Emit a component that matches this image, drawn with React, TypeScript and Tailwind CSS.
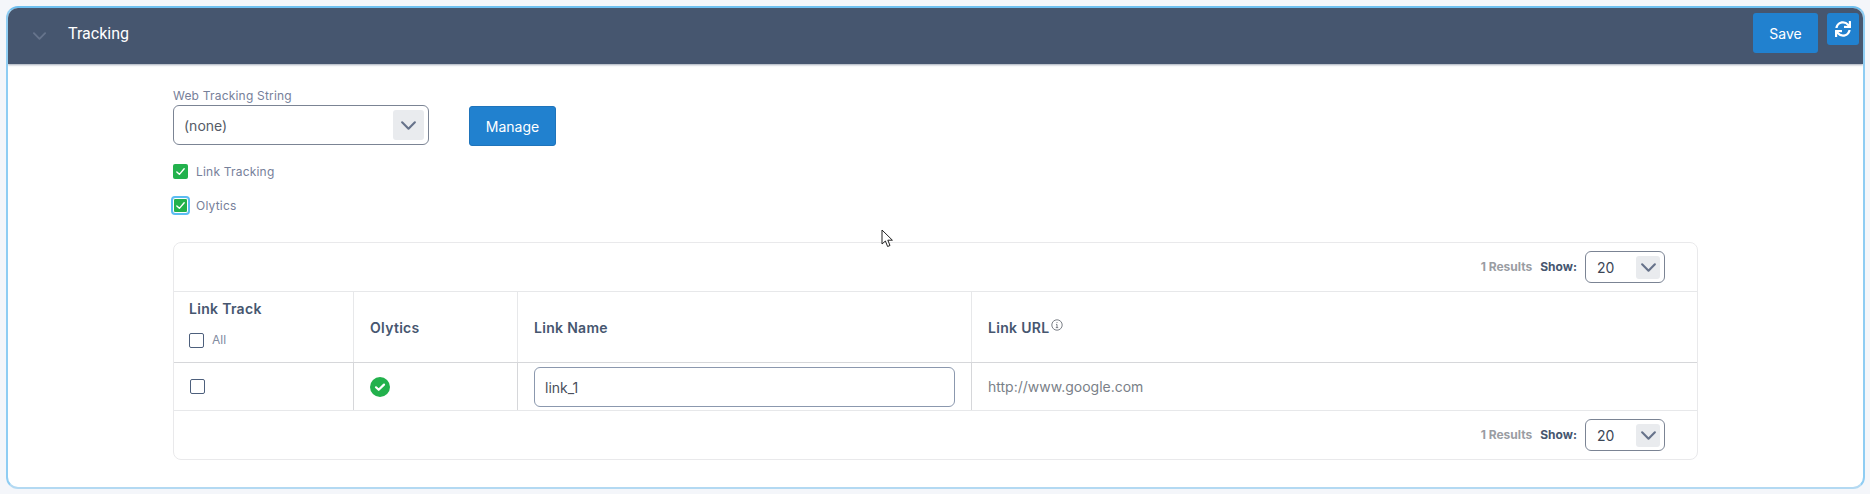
import React from "react";
import { FaSync } from "react-icons/fa";

const font = { fontFamily: "Inter, 'Noto Sans', sans-serif" };

function Chevron({ className = "" }: { className?: string }) {
  return (
    <svg viewBox="0 0 16 10" className={className} fill="none" stroke="currentColor" strokeWidth="2" strokeLinecap="round" strokeLinejoin="round">
      <path d="M2 2l6 6 6-6" />
    </svg>
  );
}

function Check({ focus = false }: { focus?: boolean }) {
  return (
    <span className={`flex items-center justify-center shrink-0 w-[15px] h-[15px] rounded-[2px] bg-[#22b14c] ${focus ? "outline-2 outline-[#5bbcf2] border border-white" : ""}`}>
      <svg viewBox="0 0 12 12" className="w-[11px] h-[11px]" fill="none" stroke="#fff" strokeWidth="1.5" strokeLinecap="round" strokeLinejoin="round">
        <path d="M2 6.5l2.8 2.6L10 3" />
      </svg>
    </span>
  );
}

function EmptyBox() {
  return <span className="block w-[15px] h-[15px] rounded-[2px] border border-[#4d5f7c] bg-white" />;
}

function Pager() {
  return (
    <div className="flex items-center justify-end h-[48px] pr-[32px]">
      <span className="text-[12px] font-bold text-[#9a9da3]">1 Results</span>
      <span className="ml-[8px] text-[12px] font-bold text-[#46566f]">Show:</span>
      <div className="ml-[8px] flex items-center justify-between w-[80px] h-[32px] pl-[11px] pr-[4px] rounded-[6px] border border-[#7b8494] bg-white">
        <span className="text-[14px] text-[#3b4656]">20</span>
        <span className="flex items-center justify-center w-[24px] h-[23px] rounded-[3px] bg-[#e9ebee] text-[#66728a]">
          <Chevron className="w-[17px] h-[11px]" />
        </span>
      </div>
    </div>
  );
}

export default function App() {
  return (
    <div className="relative w-[1870px] h-[494px] bg-[#f4f6fa] pt-[6px] px-[6px]" style={font}>
      <div className="w-[1859px] h-[483px] rounded-[12px] border-2 border-t-[#6fc0f0] border-x-[#8fcdf3] border-b-[#b3d9f2] bg-white overflow-hidden">
        <div className="flex items-start h-[56px] bg-[#46566f] shadow-[0_1px_2px_rgba(70,86,111,0.5)]">
          <Chevron className="ml-[24px] mt-[23px] w-[15px] h-[10px] text-[#66748c]" />
          <span className="ml-[21px] mt-[14px] text-[16px] leading-[24px] text-white" style={{ fontFamily: "Roboto, sans-serif" }}>Tracking</span>
          <div className="ml-auto flex items-start pt-[5px] pr-[4px] gap-[9px]">
            <button className="w-[65px] h-[40px] rounded-[3px] bg-[#2181cf] text-white text-[14px]">Save</button>
            <button className="flex items-center justify-center w-[32px] h-[32px] rounded-[3px] bg-[#2181cf] text-white">
              <FaSync className="w-[16px] h-[16px]" />
            </button>
          </div>
        </div>

        <div className="pl-[165px] pt-[25px]">
          <div className="text-[12px] leading-[14px] tracking-[0.2px] text-[#76809a] h-[16px]">Web Tracking String</div>
          <div className="flex items-start gap-[40px]">
            <div className="flex items-center justify-between w-[256px] h-[40px] pl-[10px] pr-[4px] rounded-[6px] border border-[#7b8494] bg-white">
              <span className="text-[14px] text-[#555b66]">(none)</span>
              <span className="flex items-center justify-center w-[31px] h-[30px] rounded-[3px] bg-[#e9ebee] text-[#66728a]">
                <Chevron className="w-[17px] h-[11px]" />
              </span>
            </div>
            <button className="mt-[1px] w-[87px] h-[40px] rounded-[3px] border border-[#1f74bb] bg-[#2181cf] text-white text-[14px]">Manage</button>
          </div>
          <div className="mt-[18px] flex items-center gap-[8px] h-[15px]">
            <Check />
            <span className="text-[12px] tracking-[0.2px] text-[#76809a]">Link Tracking</span>
          </div>
          <div className="mt-[19px] flex items-center gap-[8px] h-[15px]">
            <Check focus />
            <span className="text-[12px] tracking-[0.2px] text-[#76809a]">Olytics</span>
          </div>

          <div className="mt-[29px] w-[1525px] h-[218px] rounded-[8px] border border-[#e9e9eb] overflow-hidden">
            <Pager />
            <div className="flex h-[72px] border-y border-t-[#e7e8ea] border-b-[#d6d7da] text-[14px] font-semibold text-[#46566f] tracking-[0.3px]">
              <div className="w-[180px] pl-[15px] pt-[8px] border-r border-[#e7e8ea]">
                <div className="leading-[18px]">Link Track</div>
                <div className="mt-[13px] flex items-center gap-[8px]">
                  <EmptyBox />
                  <span className="text-[12px] font-normal tracking-normal text-[#828b9f]">All</span>
                </div>
              </div>
              <div className="w-[164px] pl-[16px] flex items-center border-r border-[#e7e8ea]">Olytics</div>
              <div className="w-[454px] pl-[16px] flex items-center border-r border-[#e7e8ea]">Link Name</div>
              <div className="flex-1 pl-[16px] flex items-center">
                Link URL
                <svg viewBox="0 0 12 12" className="ml-[2px] mb-[5px] w-[12px] h-[12px]" fill="none" stroke="#6b7078" strokeWidth="0.9">
                  <circle cx="6" cy="6" r="5.2" />
                  <path d="M6 5.4v3M4.8 8.6h2.4M5 5.4h1" />
                  <path d="M6 3.2v.9" strokeWidth="1.1" />
                </svg>
              </div>
            </div>
            <div className="flex h-[48px] border-b border-[#e7e8ea] text-[14px]">
              <div className="w-[180px] pl-[16px] flex items-center border-r border-[#d6d7da]">
                <EmptyBox />
              </div>
              <div className="w-[164px] pl-[16px] flex items-center border-r border-[#d6d7da]">
                <svg viewBox="0 0 20 20" className="w-[20px] h-[20px]">
                  <circle cx="10" cy="10" r="10" fill="#22b14c" />
                  <path d="M6 10.3l2.7 2.5L14 7.6" fill="none" stroke="#fff" strokeWidth="2.2" strokeLinecap="round" strokeLinejoin="round" />
                </svg>
              </div>
              <div className="w-[454px] pl-[16px] pt-[4px] border-r border-[#d6d7da]">
                <div className="flex items-center w-[421px] h-[40px] pl-[10px] rounded-[6px] border border-[#8b98ae] text-[#4a4f5c]">link_1</div>
              </div>
              <div className="flex-1 pl-[16px] flex items-center text-[#7a7f88]">http://www.google.com</div>
            </div>
            <Pager />
          </div>
        </div>
      </div>
      <svg viewBox="0 0 13 19" className="absolute left-[881px] top-[229px] w-[13px] h-[19px]" fill="#fff" stroke="#222" strokeWidth="1">
        <path d="M1 1v14l3.4-3 2.2 5.5 2.4-1-2.2-5.3h4.6z" />
      </svg>
    </div>
  );
}
